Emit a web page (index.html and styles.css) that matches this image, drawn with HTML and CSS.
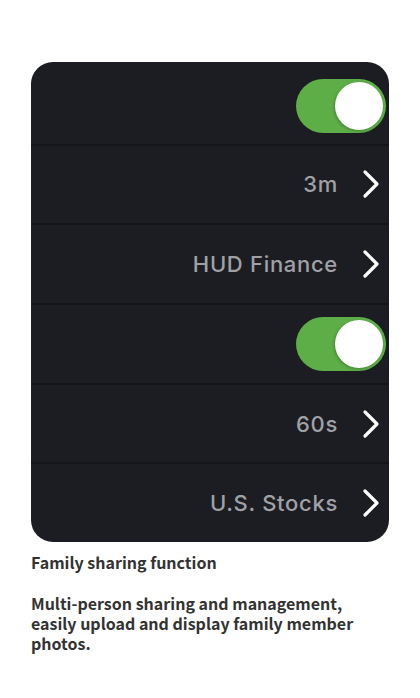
FILE: index.html
```
<!DOCTYPE html>
<html>
<head>
<meta charset="utf-8">
<link rel="stylesheet" href="styles.css">
</head>
<body>
<div class="page">
  <div class="card">
    <div class="row first">
      <div class="toggle"><div class="knob"></div></div>
    </div>
    <div class="row">
      <span class="value">3m</span>
      <svg class="chev" viewBox="0 0 18 30"><path d="M3 3 L15 15 L3 27" fill="none" stroke="#fff" stroke-width="3.2" stroke-linecap="round" stroke-linejoin="round"/></svg>
    </div>
    <div class="row">
      <span class="value">HUD Finance</span>
      <svg class="chev" viewBox="0 0 18 30"><path d="M3 3 L15 15 L3 27" fill="none" stroke="#fff" stroke-width="3.2" stroke-linecap="round" stroke-linejoin="round"/></svg>
    </div>
    <div class="row">
      <div class="toggle"><div class="knob"></div></div>
    </div>
    <div class="row">
      <span class="value">60s</span>
      <svg class="chev" viewBox="0 0 18 30"><path d="M3 3 L15 15 L3 27" fill="none" stroke="#fff" stroke-width="3.2" stroke-linecap="round" stroke-linejoin="round"/></svg>
    </div>
    <div class="row last">
      <span class="value">U.S. Stocks</span>
      <svg class="chev" viewBox="0 0 18 30"><path d="M3 3 L15 15 L3 27" fill="none" stroke="#fff" stroke-width="3.2" stroke-linecap="round" stroke-linejoin="round"/></svg>
    </div>
  </div>
  <div class="caption">
    <h2 class="title">Family sharing function</h2>
    <p class="desc">Multi-person sharing and management, easily upload and display family member photos.</p>
  </div>
</div>
</body>
</html>
```
FILE: styles.css
```
html, body {
  margin: 0;
  padding: 0;
  background: #ffffff;
}
.page {
  width: 420px;
  height: 698px;
  padding: 62px 31px 0 31px;
  box-sizing: border-box;
}
.card {
  width: 358px;
  height: 480px;
  background: #1c1d22;
  border-radius: 22px;
  overflow: hidden;
  display: flex;
  flex-direction: column;
}
.row {
  height: 78px;
  border-bottom: 2px solid #141518;
  display: flex;
  align-items: center;
  justify-content: flex-end;
  padding-right: 9px;
  box-sizing: content-box;
}
.row.first {
  height: 82px;
  padding-right: 3px;
}
.row.first .toggle {
  margin-top: 6px;
}
.row.last {
  border-bottom: none;
  height: 78px;
}
.row:nth-child(4) {
  padding-right: 3px;
}
.value {
  font-family: Inter, "Liberation Sans", sans-serif;
  font-size: 22px;
  font-weight: 500;
  color: #a0a1a6;
  margin-right: 24px;
  letter-spacing: 0.7px;
}
.chev {
  width: 18px;
  height: 30px;
  display: block;
}
.toggle {
  width: 90px;
  height: 54px;
  border-radius: 27px;
  background: #5eae48;
  position: relative;
}
.knob {
  position: absolute;
  right: 3px;
  top: 3px;
  width: 48px;
  height: 48px;
  border-radius: 50%;
  background: #ffffff;
  box-shadow: -1px 1px 3px rgba(0,0,0,0.25);
}
.caption {
  font-family: "Noto Sans CJK SC", "Noto Sans", sans-serif;
  font-weight: 700;
  color: #333333;
  font-size: 16px;
}
.title {
  margin: 9px 0 0 0;
  font-size: 16px;
  line-height: 22px;
  font-weight: 700;
}
.desc {
  margin: 20px 0 0 0;
  font-size: 16px;
  line-height: 20px;
  width: 340px;
}
```
